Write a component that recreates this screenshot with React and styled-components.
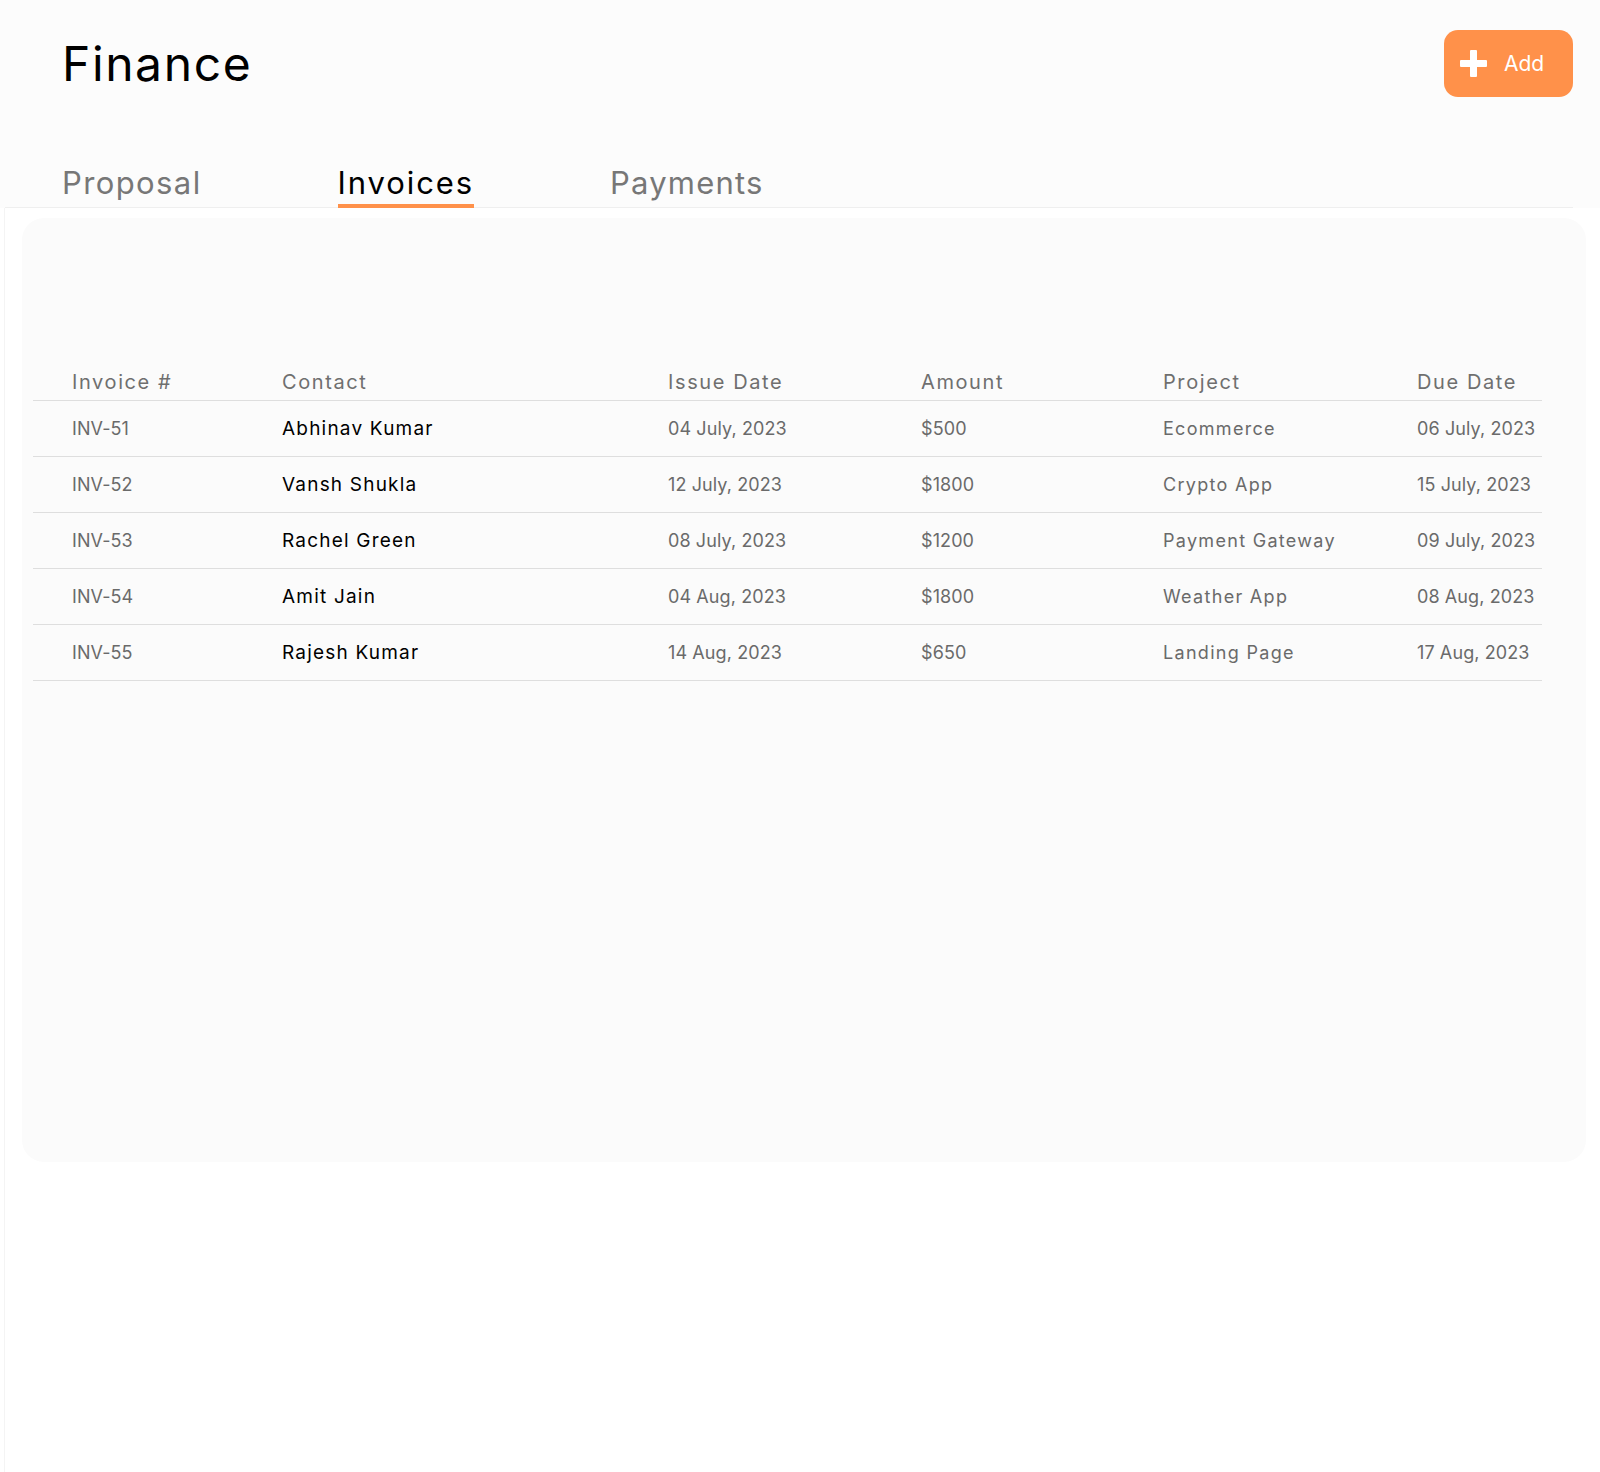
import styled, { createGlobalStyle } from "styled-components";

const GlobalStyle = createGlobalStyle`
  body {
    margin: 0;
    background: #ffffff;
    font-family: "Inter", "Open Sans", sans-serif;
  }
`;

const invoices = [
  { id: "INV-51", contact: "Abhinav Kumar", issue: "04 July, 2023", amount: "$500", project: "Ecommerce", due: "06 July, 2023" },
  { id: "INV-52", contact: "Vansh Shukla", issue: "12 July, 2023", amount: "$1800", project: "Crypto App", due: "15 July, 2023" },
  { id: "INV-53", contact: "Rachel Green", issue: "08 July, 2023", amount: "$1200", project: "Payment Gateway", due: "09 July, 2023" },
  { id: "INV-54", contact: "Amit Jain", issue: "04 Aug, 2023", amount: "$1800", project: "Weather App", due: "08 Aug, 2023" },
  { id: "INV-55", contact: "Rajesh Kumar", issue: "14 Aug, 2023", amount: "$650", project: "Landing Page", due: "17 Aug, 2023" },
];

const columns = "249px 386px 253px 242px 254px 125px";

// per kind of cell: size, colour, tracking
const cellKinds = {
  head: { size: 20, color: "#6f6f6f", spacing: 1.6 },
  name: { size: 19, color: "#000", spacing: 1.2 },
  text: { size: 18, color: "#6a6a6a", spacing: 1.3 },
  num: { size: 18, color: "#6a6a6a", spacing: 0.1 },
};

const Page = styled.div`
  display: flex;
  flex-direction: column;
  min-height: 1472px;
  background: #ffffff;
`;

const Header = styled.header`
  background: #fcfcfc;
  padding: 30px 27px 0 62px;
`;

const TopBar = styled.div`
  display: flex;
  justify-content: space-between;
  align-items: flex-start;
`;

const Title = styled.h1`
  margin: 0;
  padding-top: 4px;
  font-size: 48px;
  font-weight: 400;
  line-height: 60px;
  color: #000;
  letter-spacing: 1.6px;
`;

const AddButton = styled.button`
  display: flex;
  align-items: center;
  gap: 17px;
  width: 129px;
  height: 67px;
  padding: 0 0 0 16px;
  border: none;
  border-radius: 14px;
  background: #ff914a;
  color: #fff;
  font-family: inherit;
  font-size: 21px;
  cursor: pointer;
`;

const TabsRow = styled.nav`
  display: flex;
  margin-top: 66px;
  margin-left: -57px;
  padding-left: 57px;
  border-bottom: 1px solid #efefef;
`;

const Tab = styled.div`
  margin-right: ${(p) => p.gap}px;
  padding-bottom: 1px;
  font-size: 31px;
  line-height: 40px;
  letter-spacing: ${(p) => p.spacing}px;
  color: ${(p) => (p.active ? "#000" : "#777")};
  border-bottom: 4px solid ${(p) => (p.active ? "#ff914a" : "transparent")};
  margin-bottom: -1px;
`;

const Main = styled.main`
  flex: 1;
  margin-left: 4px;
  border-left: 1px solid #f4f4f4;
  padding: 10px 14px 0 17px;
`;

const Card = styled.section`
  height: 944px;
  background: #fbfbfb;
  border-radius: 22px;
  padding: 135px 0 0 11px;
  box-sizing: border-box;
`;

const Table = styled.div`
  width: 1509px;
`;

const Row = styled.div`
  display: grid;
  grid-template-columns: ${columns};
  height: ${(p) => (p.head ? "48px" : "56px")};
  align-items: ${(p) => (p.head ? "end" : "center")};
  border-bottom: 1px solid #dedede;
  box-sizing: border-box;
`;

const Cell = styled.div`
  padding-left: ${(p) => (p.first ? "39px" : "0")};
  padding-bottom: ${(p) => (p.kind === "head" ? "6px" : "0")};
  font-size: ${(p) => cellKinds[p.kind].size}px;
  color: ${(p) => cellKinds[p.kind].color};
  letter-spacing: ${(p) => cellKinds[p.kind].spacing}px;
  white-space: nowrap;
`;

const PlusIcon = () => (
  <svg width="27" height="27" viewBox="0 0 27 27">
    <rect x="10" y="0" width="7" height="27" rx="1" fill="#fff" />
    <rect x="0" y="10" width="27" height="7" rx="1" fill="#fff" />
  </svg>
);

export default function App() {
  return (
    <Page>
      <GlobalStyle />
      <Header>
        <TopBar>
          <Title>Finance</Title>
          <AddButton>
            <PlusIcon />
            Add
          </AddButton>
        </TopBar>
        <TabsRow>
          <Tab gap={136} spacing={1.4}>Proposal</Tab>
          <Tab gap={136} spacing={1.9} active>Invoices</Tab>
          <Tab gap={0} spacing={1.2}>Payments</Tab>
        </TabsRow>
      </Header>
      <Main>
        <Card>
          <Table>
            <Row head>
              <Cell kind="head" first>Invoice #</Cell>
              <Cell kind="head">Contact</Cell>
              <Cell kind="head">Issue Date</Cell>
              <Cell kind="head">Amount</Cell>
              <Cell kind="head">Project</Cell>
              <Cell kind="head">Due Date</Cell>
            </Row>
            {invoices.map((inv) => (
              <Row key={inv.id}>
                <Cell kind="num" first>{inv.id}</Cell>
                <Cell kind="name">{inv.contact}</Cell>
                <Cell kind="num">{inv.issue}</Cell>
                <Cell kind="num">{inv.amount}</Cell>
                <Cell kind="text">{inv.project}</Cell>
                <Cell kind="num">{inv.due}</Cell>
              </Row>
            ))}
          </Table>
        </Card>
      </Main>
    </Page>
  );
}
